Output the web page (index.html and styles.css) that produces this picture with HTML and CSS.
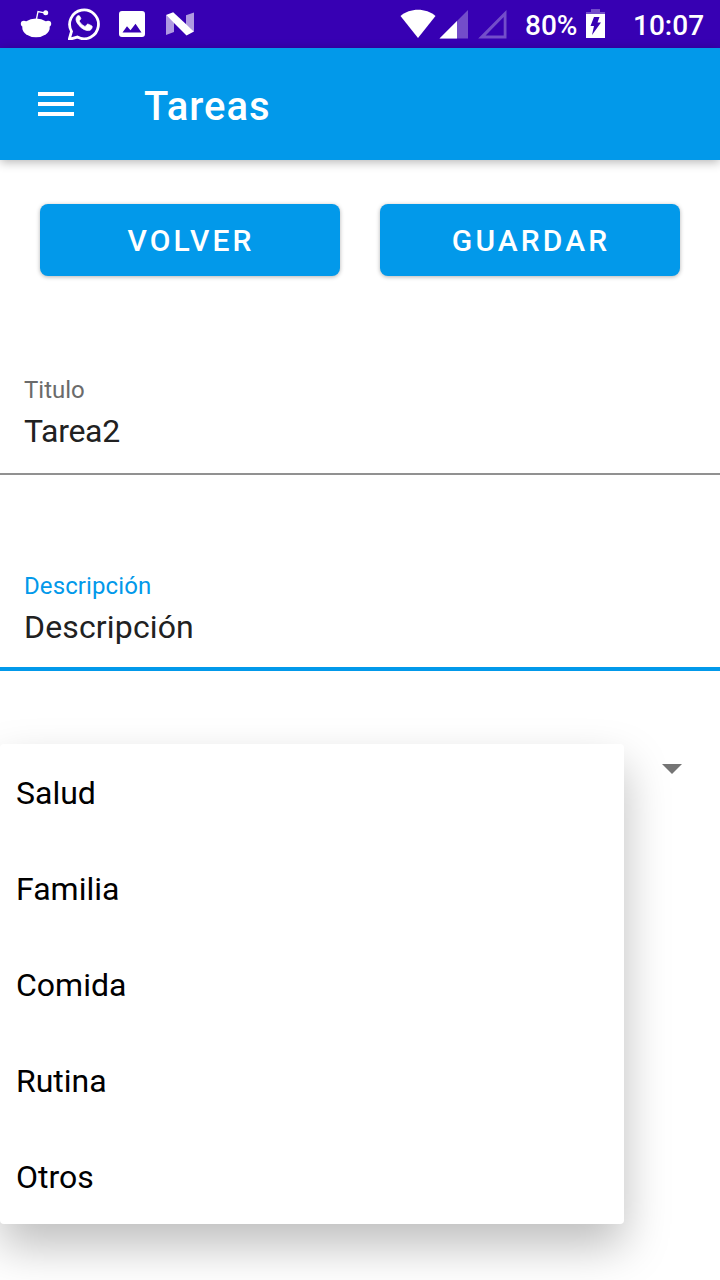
FILE: index.html
```html
<!DOCTYPE html>
<html lang="es">
<head>
<meta charset="utf-8">
<title>Tareas</title>
<link rel="stylesheet" href="styles.css">
</head>
<body>
<div class="status">
  <div class="notifications">
    <svg width="32" height="32" viewBox="0 0 32 32" fill="#fff"><ellipse cx="16" cy="19.800" rx="13.700" ry="9.400"/><circle cx="3.900" cy="15.800" r="3.1"/><circle cx="28.100" cy="15.800" r="3.1"/><circle cx="25.7" cy="4.8" r="2.5"/><path d="M16.5 11 18 3.6 24.5 4.8" fill="none" stroke="#fff" stroke-width="1.3"/></svg>
    <svg width="32" height="32" viewBox="0 0 32 32"><path d="M1.2 31 3.5 23A14.4 14.4 0 1 1 9.4 28.7Z" transform="translate(0 .4)" fill="none" stroke="#fff" stroke-width="2.8"/><path fill="#fff" stroke="#fff" stroke-width=".7" transform="translate(0 -.5)" d="M11.6 8.6c-.5-.8-1.8-.6-2.5.2-1.5 1.7-1.4 4.1-.1 6.4 2.5 4.1 5.7 6.7 9.5 7.7 2.9.8 5.5-.8 5.7-3.2.1-.8-.1-1.2-.6-1.5l-3.2-1.5c-.6-.3-1-.1-1.4.3l-1.3 1.6c-.3.3-.7.4-1.2.1-2.3-1.1-3.8-2.6-5-4.7-.3-.5-.1-.8.2-1.2l1-1.3c.2-.4.2-.7 0-1.1Z"/></svg>
    <svg width="32" height="32" viewBox="0 0 32 32"><path fill="#fff" fill-rule="evenodd" d="M6 3h20a3 3 0 0 1 3 3v20a3 3 0 0 1-3 3H6a3 3 0 0 1-3-3V6a3 3 0 0 1 3-3Zm.5 21.5h19L19.5 15.700l-5 6.500L11 18.200Z"/></svg>
    <svg width="32" height="32" viewBox="0 0 32 32" fill="#fff"><path opacity=".6" d="m2 7 8 7.500V24l-8 3ZM30 4.500v19l-8-7V7.300Z"/><path d="M2 7 9.200 4.200 30 23.500l-7.500 4Z"/></svg>
  </div>
  <div class="system">
    <svg width="36" height="30" viewBox="0 0 36 30"><path fill="#fff" d="M.5 7C10-1.400 26-1.400 35.500 7L18 29Z"/></svg>
    <svg class="signal" width="30" height="30" viewBox="0 0 30 30" fill="#fff"><path opacity=".3" d="M29 1v28.500H.5Z"/><path d="M18 12v17.500H.5Z"/></svg>
    <svg class="signal-empty" width="30" height="30" viewBox="0 0 30 30"><path opacity=".3" fill="#fff" fill-rule="evenodd" d="M28.500 1v28.500H.2ZM25.700 8v18.500H7.600Z"/></svg>
    <span class="percent">80%</span>
    <svg class="battery" width="19" height="30" viewBox="0 0 19 30"><path fill="#fff" opacity=".3" d="M5 0h9v3h5v3H0V3h5Z"/><path fill="#fff" fill-rule="evenodd" d="M0 5h19v24H0ZM8 8h5.500l-2 5.500H15L6 26l2-9H4.500Z"/></svg>
    <span class="clock">10:07</span>
  </div>
</div>
<header class="appbar">
  <svg class="menu-icon" width="36" height="24" viewBox="0 0 36 24"><path fill="#fff" d="M0 0h36v4H0ZM0 10h36v4H0ZM0 20h36v4H0Z"/></svg>
  <h1 class="title">Tareas</h1>
</header>
<main>
  <div class="actions">
    <button class="button">VOLVER</button>
    <button class="button">GUARDAR</button>
  </div>
  <div class="field">
    <div class="label">Titulo</div>
    <div class="value tight">Tarea2</div>
  </div>
  <div class="field focused">
    <div class="label">Descripción</div>
    <div class="value">Descripción</div>
  </div>
  <div class="select">
    <svg class="arrow" width="20" height="10" viewBox="0 0 20 10"><path fill="#757575" d="M0 0h20L10 10Z"/></svg>
    <div class="options">
      <div class="option">Salud</div>
      <div class="option">Familia</div>
      <div class="option">Comida</div>
      <div class="option">Rutina</div>
      <div class="option">Otros</div>
    </div>
  </div>
</main>
</body>
</html>
```
FILE: styles.css
```css
* { box-sizing: border-box; }
html, body { height: 100%; }
body { margin: 0; background: #fff; font-family: Roboto, "Liberation Sans", sans-serif; color: #000; overflow: hidden; }
svg { display: block; flex: none; }
.status { height: 48px; background: #3700b3; color: #fff; display: flex; justify-content: space-between; padding: 0 16px 0 20px; }
.notifications { display: flex; align-items: center; gap: 16px; }
.system { display: flex; align-items: center; font-size: 28px; font-weight: 500; line-height: 48px; }
.signal { margin-left: 3px; }
.signal-empty { margin-left: 9px; }
.percent { width: 52px; margin-left: 17px; padding-top: 3px; }
.battery { margin-left: 9px; }
.clock { width: 71px; margin-left: 28px; padding-top: 3px; }
.appbar { height: 112px; background: #0299ea; color: #fff; display: flex; align-items: center; padding-left: 38px; box-shadow: 0 2px 10px rgba(0, 0, 0, .3); }
.title { margin: 6px 0 0 70px; font-size: 40px; font-weight: 500; letter-spacing: 1px; line-height: 56px; }
.actions { display: grid; grid-template-columns: 1fr 1fr; gap: 40px; padding: 44px 40px 0; }
.button { height: 72px; border: 0; border-radius: 8px; padding: 2px 0 0 2px; background: #0299ea; color: #fff; font: 500 30px/70px Roboto, sans-serif; letter-spacing: 3.1px; box-shadow: 0 1px 4px rgba(0, 0, 0, .3); }
.field { height: 112px; margin-top: 87px; padding: 13px 24px 0; border-bottom: 2px solid #919191; }
.label { font-size: 24px; line-height: 28px; color: #6b6b6b; }
.value { font-size: 32px; line-height: 40px; margin-top: 7px; color: #212121; letter-spacing: .15px; }
.tight { letter-spacing: -.3px; }
.focused { margin-top: 84px; border-bottom: 4px solid #0299ea; }
.focused .label { color: #0299ea; letter-spacing: .1px; }
.select { position: relative; height: 88px; margin-top: 73px; padding: 20px 38px; display: flex; justify-content: flex-end; }
.options { position: absolute; top: 0; left: 0; width: 624px; border-radius: 4px; background: #fff; box-shadow: 0 22px 46px rgba(0, 0, 0, .26); }
.option { height: 96px; padding: 1px 16px 0; font-size: 32px; line-height: 96px; }
```
